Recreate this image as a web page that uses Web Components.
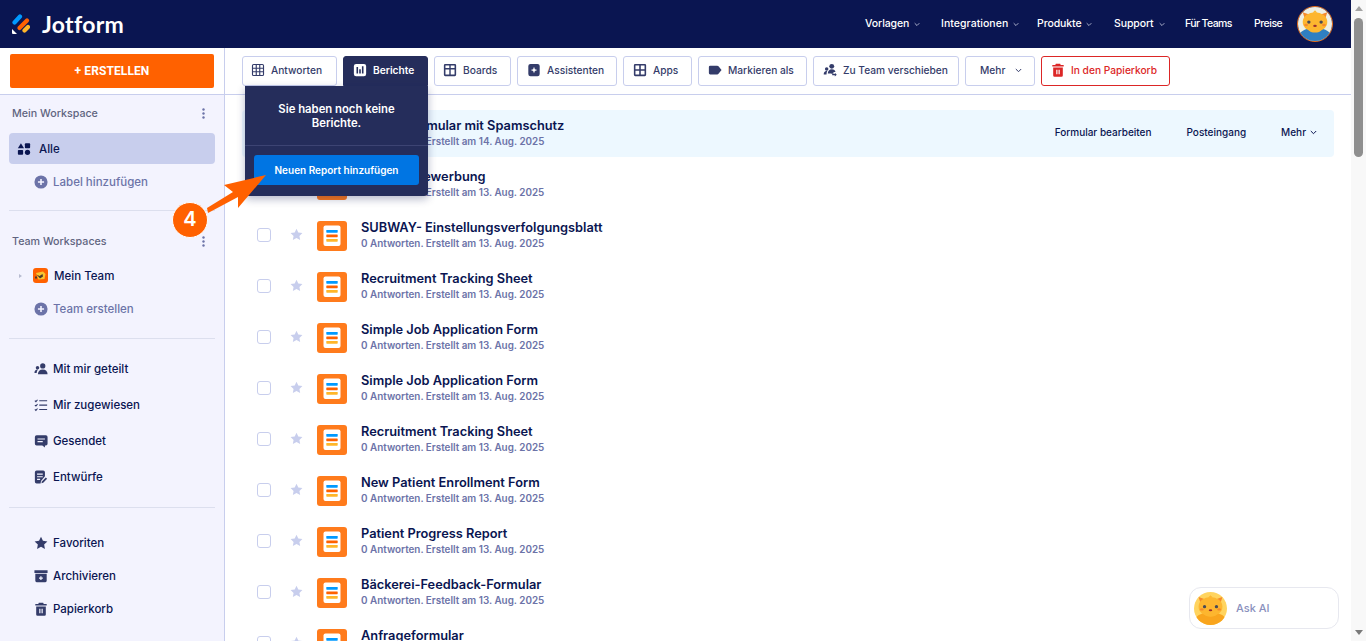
<!DOCTYPE html>
<html lang="de">
<head>
<meta charset="utf-8">
<title>Jotform</title>
<style>
  html, body { margin: 0; height: 100%; overflow: hidden; }
  body { font-family: Inter, "Liberation Sans", sans-serif; color: #0a1551; background: #fff; }
  jf-app { height: 641px; }
</style>
</head>
<body>
<jf-app>
  <jf-navbar slot="nav"></jf-navbar>
  <jf-sidebar slot="side">
    <jf-side-heading>Mein Workspace</jf-side-heading>
    <jf-side-item icon="grid" active style="margin-top:11px">Alle</jf-side-item>
    <jf-side-item icon="plus" muted style="margin-top:1px">Label hinzufügen</jf-side-item>
    <jf-side-rule style="margin-top:12px"></jf-side-rule>
    <jf-side-heading style="margin-top:21px">Team Workspaces</jf-side-heading>
    <jf-side-item icon="team" style="margin-top:9px">Mein Team</jf-side-item>
    <jf-side-item icon="plus" muted>Team erstellen</jf-side-item>
    <jf-side-rule style="margin-top:13px"></jf-side-rule>
    <jf-side-item icon="shared" style="margin-top:12px" tall>Mit mir geteilt</jf-side-item>
    <jf-side-item icon="assigned" tall>Mir zugewiesen</jf-side-item>
    <jf-side-item icon="sent" tall>Gesendet</jf-side-item>
    <jf-side-item icon="drafts" tall>Entwürfe</jf-side-item>
    <jf-side-rule style="margin-top:12px"></jf-side-rule>
    <jf-side-item icon="star" style="margin-top:18px">Favoriten</jf-side-item>
    <jf-side-item icon="archive">Archivieren</jf-side-item>
    <jf-side-item icon="trash">Papierkorb</jf-side-item>
  </jf-sidebar>
  <jf-toolbar slot="tools">
    <jf-tool icon="table" style="width:95px;--pad:8px">Antworten</jf-tool>
    <jf-tool icon="report" open style="width:85px">Berichte
      <jf-reports-popover slot="over"></jf-reports-popover>
    </jf-tool>
    <jf-tool icon="boards" style="width:77px;--pad:8px">Boards</jf-tool>
    <jf-tool icon="assist" style="width:100px">Assistenten</jf-tool>
    <jf-tool icon="apps" style="width:69px">Apps</jf-tool>
    <jf-tool icon="tag" style="width:109px">Markieren als</jf-tool>
    <jf-tool icon="move" style="width:146px">Zu Team verschieben</jf-tool>
    <jf-tool chevron style="width:70px">Mehr</jf-tool>
    <jf-tool icon="trash" danger style="width:129px">In den Papierkorb</jf-tool>
  </jf-toolbar>
  <jf-form-list slot="list">
    <jf-form-row selected date="14. Aug. 2025">Kontaktformular mit Spamschutz</jf-form-row>
    <jf-form-row>Personalbewerbung</jf-form-row>
    <jf-form-row>SUBWAY- Einstellungsverfolgungsblatt</jf-form-row>
    <jf-form-row>Recruitment Tracking Sheet</jf-form-row>
    <jf-form-row>Simple Job Application Form</jf-form-row>
    <jf-form-row>Simple Job Application Form</jf-form-row>
    <jf-form-row>Recruitment Tracking Sheet</jf-form-row>
    <jf-form-row>New Patient Enrollment Form</jf-form-row>
    <jf-form-row>Patient Progress Report</jf-form-row>
    <jf-form-row>Bäckerei-Feedback-Formular</jf-form-row>
    <jf-form-row>Anfrageformular</jf-form-row>
  </jf-form-list>
  <jf-scrollbar slot="scroll"></jf-scrollbar>
  <jf-callout slot="over" number="4"></jf-callout>
  <jf-ask-ai slot="over"></jf-ask-ai>
</jf-app>

<script>
const ICONS = {
  grid: '<path d="M4.5 1.5 8 7H1z"/><rect x="9" y="1.5" width="6" height="5.5" rx="1"/><rect x="1" y="9" width="6" height="5.5" rx="1"/><circle cx="12" cy="11.8" r="3"/>',
  plus: '<circle cx="8" cy="8" r="7.5"/><path d="M8 4.500v7M4.500 8h7" stroke="#f3f3fe" stroke-width="1.800"/>',
  shared: '<circle cx="10" cy="4.5" r="3"/><path d="M4.5 14c0-3.5 2.2-5.5 5.5-5.5s5.500 2 5.500 5.500z"/><circle cx="4" cy="6.500" r="2"/><path d="M0.500 12.500c0-2.500 1.300-4 3.500-4l.6.100c-1 1-1.500 2.300-1.600 3.900z"/>',
  assigned: '<path d="M1 3l1.200 1.200L4 2M1 8l1.200 1.200L4 7M1 13l1.200 1.200L4 12" fill="none" stroke="currentColor" stroke-width="1.200"/><path d="M6 2.500h9v1.300H6zM6 7.500h9v1.300H6zM6 12.500h9v1.300H6z"/>',
  sent: '<path fill-rule="evenodd" d="M3 1.500h10.500A2 2 0 0 1 15.500 3.500v7.500a2 2 0 0 1-2 2H12.500v2.500L9.500 13H3a2 2 0 0 1-2-2V3.500a2 2 0 0 1 2-2zM4 5v1.400h8.500V5zM4 8v1.400h6V8z"/>',
  drafts: '<path fill-rule="evenodd" d="M3 0.500h7.500a2 2 0 0 1 2 2V7L8 12.500l-.5 3H3a2 2 0 0 1-2-2v-11a2 2 0 0 1 2-2zM3.500 4v1.300h6.500V4zM3.500 7v1.300h6.500V7zM3.500 10v1.300h3.500V10z"/><path d="M9 13l4.500-4.500 1.500 1.500-4.500 4.500-2 .5z"/>',
  star: '<path d="M8 .8l2.200 4.700 5.100.7-3.700 3.500.9 5.100L8 12.400l-4.500 2.400.9-5.100L.7 6.200l5.100-.7z"/>',
  archive: '<path fill-rule="evenodd" d="M.5 1.500h15v3H.5zM1.500 5.500h13v8a1.500 1.500 0 0 1-1.500 1.500H3a1.500 1.500 0 0 1-1.500-1.500zM7.200 8.200v1.500H5.700v1.300h1.500v1.500h1.400V11h1.500V9.700H8.600V8.200z"/>',
  trash: '<path fill-rule="evenodd" d="M5.500.8h5l.6 1.400h3.400v1.800h-13V2.200h3.400zM2.500 5h11v9.200a1.500 1.500 0 0 1-1.500 1.500H4a1.500 1.500 0 0 1-1.500-1.500zM6 7.800v5h1.400v-5zM8.600 7.800v5H10v-5z"/>',
  table: '<path fill="none" stroke="currentColor" stroke-width="1.300" d="M3 1.700h10A1.300 1.300 0 0 1 14.300 3v10a1.300 1.300 0 0 1-1.300 1.300H3A1.300 1.300 0 0 1 1.700 13V3A1.300 1.300 0 0 1 3 1.700zM1.700 6h12.600M1.700 10h12.600M6 1.700v12.600M10 1.700v12.600"/>',
  report: '<rect x="1" y="1" width="14" height="14" rx="2.500" fill="#fff"/><path fill="#252d5b" d="M4 4.500h1.800v7.500H4zM7.100 7h1.800v5H7.100zM10.200 3.800H12V12h-1.800z"/>',
  boards: '<path fill-rule="evenodd" d="M2.500 1h11A1.500 1.500 0 0 1 15 2.500v11a1.500 1.500 0 0 1-1.500 1.500h-11A1.500 1.500 0 0 1 1 13.500v-11A1.500 1.500 0 0 1 2.500 1zM2.800 2.800v3h4.400v-3zM8.800 2.800v3h4.400v-3zM2.800 7.400v5.800h4.400V7.400zM8.800 7.400v5.800h4.400V7.400z"/>',
  assist: '<rect x="1.500" y="1" width="13" height="14" rx="2.500"/><path fill="#fff" d="M8 4.200l1 2.800 2.800 1L9 9 8 11.800 7 9 4.200 8 7 7z"/>',
  apps: '<path fill-rule="evenodd" d="M2.500 1h11A1.500 1.500 0 0 1 15 2.500v11a1.500 1.500 0 0 1-1.500 1.500h-11A1.500 1.500 0 0 1 1 13.500v-11A1.500 1.500 0 0 1 2.500 1zM2.800 2.800v4.300h4.300V2.800zM8.900 2.800v4.300h4.300V2.800zM2.800 8.900v4.300h4.300V8.900zM8.900 8.900v4.300h4.300V8.900z"/>',
  tag: '<path d="M2.500 3h8a2 2 0 0 1 1.500.7L15.500 8 12 12.300a2 2 0 0 1-1.500.7h-8A1.500 1.500 0 0 1 1 11.500v-7A1.500 1.500 0 0 1 2.500 3z"/>',
  move: '<circle cx="10" cy="3.800" r="2.800"/><path d="M5.500 12c0-3 1.900-5 4.500-5s4 1.500 4.300 3.200H12v2h-2.500v-.2z"/><circle cx="4.200" cy="6.800" r="2"/><path d="M.8 13c0-2.500 1.200-4 3.200-4 .4 0 .6 0 .8.100-.5.900-.8 2.300-.8 3.900z"/><path d="M10.500 12.500h3V11l2.200 2.300-2.200 2.200V14h-3z"/>'
};

function icon(name, size) {
  return `<svg width="${size}" height="${size}" viewBox="0 0 16 16" fill="currentColor" aria-hidden="true">${ICONS[name]}</svg>`;
}

const CHEVRON = '<svg width="7" height="5" viewBox="0 0 7 5" fill="none" stroke="currentColor" stroke-width="1" aria-hidden="true"><path d="M.8 1l2.700 2.700L6.200 1"/></svg>';

// used for the nav avatar and the Ask AI button
function catFace(bg, body, chest) {
  return `<svg width="100%" height="100%" viewBox="0 0 36 36" aria-hidden="true">
    <rect width="36" height="36" fill="${bg}"/>
    <path d="M2 28c3-4 9-6 16-6s13 2 16 6v8H2z" fill="${body}"/>
    <path d="M11 24c2 4 12 4 14 0z" fill="${chest}"/>
    <path d="M5 5.500l7 2.500-4 7zM31 5.500l-7 2.500 4 7z" fill="#f58a2c"/>
    <path d="M15.500 6l2.500-2.500L20.500 6z" fill="#fdb62f"/>
    <ellipse cx="18" cy="16" rx="13" ry="10.500" fill="#fdb62f"/>
    <ellipse cx="8.500" cy="19" rx="2" ry="1.300" fill="#f58a2c"/><ellipse cx="27.500" cy="19" rx="2" ry="1.300" fill="#f58a2c"/>
    <circle cx="11.500" cy="16" r="1.800" fill="#4a4a55"/><circle cx="24.500" cy="16" r="1.800" fill="#4a4a55"/>
    <ellipse cx="18" cy="20" rx="1.900" ry="1.100" fill="#9c2f2f"/>
  </svg>`;
}

class JfApp extends HTMLElement {
  constructor() {
    super();
    this.attachShadow({ mode: "open" }).innerHTML = `
      <style>
        :host { display: grid; grid-template-columns: 1fr 15px; position: relative; overflow: hidden; }
        .page { display: grid; grid-template: 48px 1fr / 225px 1fr; min-width: 0; height: 641px; }
        .nav { grid-column: 1 / 3; }
        .main { display: flex; flex-direction: column; min-width: 0; min-height: 0; overflow: hidden; }
      </style>
      <div class="page">
        <div class="nav"><slot name="nav"></slot></div>
        <slot name="side"></slot>
        <div class="main"><slot name="tools"></slot><slot name="list"></slot></div>
      </div>
      <slot name="scroll"></slot>
      <slot name="over"></slot>`;
  }
}

class JfNavbar extends HTMLElement {
  constructor() {
    super();
    // label, has chevron, width up to the next label, tracking
    const menu = [["Vorlagen", 1, 76, -.1], ["Integrationen", 1, 96, .05], ["Produkte", 1, 77, -.1], ["Support", 1, 71, -.1], ["Für Teams", 0, 69, -.6], ["Preise", 0, 28, -.5]];
    this.attachShadow({ mode: "open" }).innerHTML = `
      <style>
        :host { display: flex; align-items: center; height: 48px; background: #0a1551; color: #fff; padding: 0 18px 0 12px; }
        .logo { display: flex; align-items: center; gap: 12px; font: 700 23px/1 Lato, sans-serif; letter-spacing: .3px; }
        nav { margin-left: auto; display: flex; align-items: center; font-size: 10.500px; font-weight: 500; }
        a { display: flex; align-items: center; gap: 5px; white-space: nowrap; margin-top: -2px; }
        a svg { color: #c4c8dd; width: 6px; margin-top: 2px; }
        .avatar { width: 36px; height: 36px; margin-left: 15px; box-sizing: border-box; border: 1.500px solid #e8701a; border-radius: 50%; overflow: hidden; }
      </style>
      <div class="logo">
        <svg width="18" height="20" viewBox="0 0 18 20" aria-hidden="true">
          <path d="M2.500 8.500L8 2.500" stroke="#0099ff" stroke-width="4.200" stroke-linecap="round"/>
          <path d="M7.500 14L15 6.500" stroke="#ff6100" stroke-width="4.200" stroke-linecap="round"/>
          <path d="M12.500 16.500L16 13" stroke="#ffb629" stroke-width="4.200" stroke-linecap="round"/>
          <path d="M0 15l5 5H1a1 1 0 0 1-1-1z" fill="#fff"/>
        </svg>
        <span>Jotform</span>
      </div>
      <nav>
        ${menu.map(([t, c, w, s]) => `<a style="width:${w}px;letter-spacing:${s}px">${t}${c ? CHEVRON : ""}</a>`).join("")}
        <div class="avatar">${catFace("#eef0e4", "#2f7fc1", "#fdb62f")}</div>
      </nav>`;
  }
}

class JfSidebar extends HTMLElement {
  constructor() {
    super();
    this.attachShadow({ mode: "open" }).innerHTML = `
      <style>
        :host { display: flex; flex-direction: column; background: #f3f3fe; border-right: 1px solid #c8ceed; min-height: 0; overflow: hidden; }
        .top { background: #fff; border-bottom: 1px solid #c8ceed; padding: 6px 10px; height: 34px; flex: none; }
        button { width: 100%; height: 34px; display: block; border: 0; border-radius: 2px; background: #ff6100; color: #fff; font: 700 12px/34px Roboto, sans-serif; padding: 0; letter-spacing: .1px; }
        .body { padding: 9px 9px 0; display: flex; flex-direction: column; }
      </style>
      <div class="top"><button>+ ERSTELLEN</button></div>
      <div class="body"><slot></slot></div>`;
  }
}

class JfSideHeading extends HTMLElement {
  constructor() {
    super();
    this.attachShadow({ mode: "open" }).innerHTML = `
      <style>
        :host { display: flex; align-items: center; justify-content: space-between; height: 18px; padding: 0 3px; font-size: 10.700px; font-weight: 500; color: #5f6480; }
        svg { margin-right: 7px; color: #6c73a8; }
      </style>
      <span><slot></slot></span>
      <svg width="3" height="11" viewBox="0 0 3 11" fill="currentColor" aria-hidden="true"><circle cx="1.500" cy="1.500" r="1.200"/><circle cx="1.500" cy="5.500" r="1.200"/><circle cx="1.500" cy="9.500" r="1.200"/></svg>`;
  }
}

class JfSideRule extends HTMLElement {
  constructor() {
    super();
    this.attachShadow({ mode: "open" }).innerHTML = `<style>:host { display: block; height: 1px; background: #dcdfee; }</style>`;
  }
}

class JfSideItem extends HTMLElement {
  constructor() {
    super();
    const name = this.getAttribute("icon");
    const mark = name === "team"
      ? `<i class="caret"></i><svg width="15" height="15" viewBox="0 0 15 15" aria-hidden="true"><rect width="15" height="15" rx="3" fill="#ff6100"/><path d="M3 5l7-1.500 2.500 2.500-1 5-6 .5z" fill="#f7c531"/><path d="M3.500 6.500l3 1.500 3-2 .5 2.500-3 2zM2 8.500h2v2H2z" fill="#4a3a2a"/></svg>`
      : icon(name, 14);
    this.attachShadow({ mode: "open" }).innerHTML = `
      <style>
        :host { display: flex; align-items: center; height: 33px; padding-left: 25px; font-size: 11.500px; font-weight: 500; color: #0a1551; border-radius: 4px; }
        :host([tall]) { height: 36px; }
        :host([active]) { background: #c8ceed; height: 31px; padding-left: 8px; color: #0a1551; }
        :host([muted]) { color: #6c73a8; }
        :host([icon="team"]) { padding-left: 10px; }
        .mark { display: flex; align-items: center; margin-right: 5px; color: #343c6a; }
        :host([active]) .mark { margin-right: 8px; color: #0a1551; }
        :host([muted]) .mark { color: #6c73a8; }
        :host([icon="team"]) .mark { margin-right: 6px; }
        .caret { width: 0; height: 0; border: 2.500px solid transparent; border-left: 3px solid #b7bbd0; margin-right: 9px; }
      </style>
      <span class="mark">${mark}</span><span><slot></slot></span>`;
  }
}

class JfToolbar extends HTMLElement {
  constructor() {
    super();
    this.attachShadow({ mode: "open" }).innerHTML = `
      <style>
        :host { display: flex; gap: 6px; flex: none; height: 38px; padding: 8px 0 0 17px; border-bottom: 1px solid #c8ceed; }
      </style>
      <slot></slot>`;
  }
}

class JfTool extends HTMLElement {
  constructor() {
    super();
    const name = this.getAttribute("icon");
    const chevron = this.hasAttribute("chevron");
    this.attachShadow({ mode: "open" }).innerHTML = `
      <style>
        :host { display: block; position: relative; flex: none; height: 30px; font-size: 10.200px; font-weight: 500; color: #343c6a; }
        .btn { box-sizing: border-box; display: flex; align-items: center; gap: 6px; height: 30px; padding: 0 0 2px var(--pad, 9px); border: 1px solid #c8ceed; border-radius: 3px; white-space: nowrap; background: #fff; }
        svg { flex: none; }
        :host([chevron]) .btn { padding-left: 14px; gap: 10px; }
        :host([open]) { font-weight: 600; }
        :host([open]) .btn { background: #252d5b; border-color: #252d5b; color: #fff; border-radius: 3px 3px 0 0; }
        :host([danger]) .btn { border-color: #dc2626; color: #dc2626; }
      </style>
      <div class="btn">${name ? icon(name, 14) : ""}<span><slot></slot></span>${chevron ? CHEVRON : ""}</div>
      <slot name="over"></slot>`;
  }
}

class JfReportsPopover extends HTMLElement {
  constructor() {
    super();
    this.attachShadow({ mode: "open" }).innerHTML = `
      <style>
        :host { position: absolute; z-index: 5; top: 30px; right: 0; width: 183px; height: 110px; box-sizing: border-box; background: #252d5b; color: #fff; border-radius: 0 0 4px 4px; box-shadow: 0 3px 8px rgba(10,21,81,.3); font-size: 11.300px; font-weight: 600; }
        p { margin: 0; height: 60px; box-sizing: border-box; padding: 16px 20px 0; line-height: 14px; text-align: center; border-bottom: 1px solid #3d4473; }
        button { display: block; box-sizing: border-box; margin: 9px 9px 0; width: 165px; height: 30px; border: 0; border-radius: 3px; background: #0075e3; color: #fff; font: inherit; font-size: 10px; padding: 0; }
      </style>
      <p>Sie haben noch keine Berichte.</p>
      <button>Neuen Report hinzufügen</button>`;
  }
}

class JfFormList extends HTMLElement {
  constructor() {
    super();
    this.attachShadow({ mode: "open" }).innerHTML = `
      <style>
        :host { display: flex; flex-direction: column; gap: 4px; padding: 15px 17px 0; min-height: 0; }
      </style>
      <slot></slot>`;
  }
}

class JfFormRow extends HTMLElement {
  constructor() {
    super();
    const date = this.getAttribute("date") || "13. Aug. 2025";
    const actions = this.hasAttribute("selected")
      ? `<div class="actions"><span>Formular bearbeiten</span><span>Posteingang</span><span class="more">Mehr ${CHEVRON}</span></div>`
      : "";
    this.attachShadow({ mode: "open" }).innerHTML = `
      <style>
        :host { display: flex; flex: none; align-items: center; height: 47px; padding-left: 15px; border-radius: 4px; }
        :host([selected]) { background: #edf8ff; }
        .check { flex: none; width: 12px; height: 12px; border: 1px solid #c8ceed; border-radius: 3px; background: #fff; margin-bottom: 2px; }
        .star { flex: none; margin: 0 14px 2px 19px; color: #c8ceed; display: flex; }
        .form { flex: none; width: 30px; height: 30px; border-radius: 3px; background: #ff7b1c; display: flex; }
        .text { margin: -1px 0 0 14px; }
        .title { font-size: 12.800px; font-weight: 600; line-height: 16px; color: #0a1551; white-space: nowrap; }
        .sub { font-size: 9.900px; font-weight: 600; line-height: 14px; color: #6c73a8; white-space: nowrap; }
        .actions { margin: 0 0 3px auto; padding-right: 16px; display: flex; gap: 35px; font-size: 10px; font-weight: 500; color: #0a1551; }
        .more { display: flex; align-items: center; gap: 3px; }
        .more svg { width: 9px; }
      </style>
      <span class="check"></span>
      <span class="star">${icon("star", 13)}</span>
      <span class="form">
        <svg width="30" height="30" viewBox="0 0 30 30" aria-hidden="true">
          <rect x="6.500" y="4.500" width="17" height="20.500" rx="2" fill="#fff"/>
          <rect x="9.300" y="9" width="11.400" height="2.700" rx=".6" fill="#0099ff"/>
          <rect x="9.300" y="13.500" width="11.400" height="2.700" rx=".6" fill="#ff6100"/>
          <rect x="9.300" y="18" width="11.400" height="2.700" rx=".6" fill="#ffb629"/>
        </svg>
      </span>
      <div class="text">
        <div class="title"><slot></slot></div>
        <div class="sub">0 Antworten. Erstellt am ${date}</div>
      </div>
      ${actions}`;
  }
}

class JfScrollbar extends HTMLElement {
  constructor() {
    super();
    this.attachShadow({ mode: "open" }).innerHTML = `
      <style>
        :host { display: flex; flex-direction: column; align-items: center; background: #f8f8f8; height: 641px; }
        .up, .down { width: 0; height: 0; border: 4.500px solid transparent; }
        .up { border-bottom: 5px solid #a3a3a3; border-top: 0; margin-top: 6px; }
        .down { border-top: 5px solid #7a7a7a; border-bottom: 0; margin-top: auto; margin-bottom: 6px; }
        .thumb { width: 9px; height: 139px; margin-top: 7px; background: #8f8f8f; border-radius: 5px; }
      </style>
      <div class="up"></div><div class="thumb"></div><div class="down"></div>`;
  }
}

class JfCallout extends HTMLElement {
  constructor() {
    super();
    this.attachShadow({ mode: "open" }).innerHTML = `
      <style>
        :host { position: absolute; z-index: 10; left: 172px; top: 175px; width: 96px; height: 64px; }
        svg { position: absolute; inset: 0; }
        .num { position: absolute; left: 0; top: 27px; width: 36px; height: 36px; box-sizing: border-box; border: 1.500px solid #fff; border-radius: 50%; background: #ff6100; color: #fff; font: 600 20px/33px Inter, sans-serif; text-align: center; }
      </style>
      <svg width="96" height="64" viewBox="0 0 96 64" aria-hidden="true">
        <path d="M35 33L61 17 52 10 94 0 66 33 66 22 36 38z" fill="#ff6100"/>
      </svg>
      <div class="num">${this.getAttribute("number")}</div>`;
  }
}

class JfAskAi extends HTMLElement {
  constructor() {
    super();
    this.attachShadow({ mode: "open" }).innerHTML = `
      <style>
        :host { position: absolute; z-index: 6; left: 1189px; top: 587px; width: 150px; height: 42px; box-sizing: border-box; display: flex; align-items: center; background: #fff; border: 1px solid #e7e8ef; border-radius: 12px; padding-left: 4px; font-size: 11px; font-weight: 500; color: #8a90bd; }
        .face { width: 33px; height: 33px; margin-right: 9px; border-radius: 50%; overflow: hidden; }
      </style>
      <div class="face">${catFace("#ffd45f", "#f9a51e", "#fdb62f")}</div>
      <span>Ask AI</span>`;
  }
}

customElements.define("jf-app", JfApp);
customElements.define("jf-navbar", JfNavbar);
customElements.define("jf-sidebar", JfSidebar);
customElements.define("jf-side-heading", JfSideHeading);
customElements.define("jf-side-rule", JfSideRule);
customElements.define("jf-side-item", JfSideItem);
customElements.define("jf-toolbar", JfToolbar);
customElements.define("jf-tool", JfTool);
customElements.define("jf-reports-popover", JfReportsPopover);
customElements.define("jf-form-list", JfFormList);
customElements.define("jf-form-row", JfFormRow);
customElements.define("jf-scrollbar", JfScrollbar);
customElements.define("jf-callout", JfCallout);
customElements.define("jf-ask-ai", JfAskAi);
</script>
</body>
</html>
